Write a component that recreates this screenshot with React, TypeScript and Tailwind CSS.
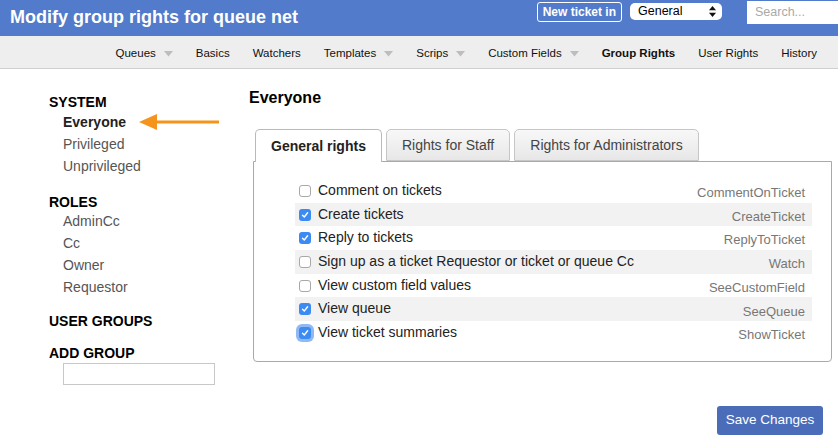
import React from "react";

const navItems: { label: string; arrow?: boolean; active?: boolean }[] = [
  { label: "Queues", arrow: true },
  { label: "Basics" },
  { label: "Watchers" },
  { label: "Templates", arrow: true },
  { label: "Scrips", arrow: true },
  { label: "Custom Fields", arrow: true },
  { label: "Group Rights", active: true },
  { label: "User Rights" },
  { label: "History" },
];

const rights: { label: string; name: string; checked: boolean; focus?: boolean }[] = [
  { label: "Comment on tickets", name: "CommentOnTicket", checked: false },
  { label: "Create tickets", name: "CreateTicket", checked: true },
  { label: "Reply to tickets", name: "ReplyToTicket", checked: true },
  { label: "Sign up as a ticket Requestor or ticket or queue Cc", name: "Watch", checked: false },
  { label: "View custom field values", name: "SeeCustomField", checked: false },
  { label: "View queue", name: "SeeQueue", checked: true },
  { label: "View ticket summaries", name: "ShowTicket", checked: true, focus: true },
];

function DownArrow() {
  return (
    <svg width="9" height="6" viewBox="0 0 9 6" className="ml-[8px]">
      <polygon points="0,0 9,0 4.5,5.5" fill="#bdbdbd" />
    </svg>
  );
}

function Checkbox({ checked, focus }: { checked: boolean; focus?: boolean }) {
  if (checked) {
    return (
      <div
        className={
          "w-[12px] h-[12px] rounded-[3px] bg-[#3b8bf2] flex items-center justify-center shrink-0 " +
          (focus ? "ring-[3px] ring-[#8fb9f5]" : "")
        }
      >
        <svg width="8" height="8" viewBox="0 0 8 8">
          <polyline points="1.5,4.2 3.3,6 6.6,1.8" fill="none" stroke="white" strokeWidth="1.4" strokeLinecap="round" strokeLinejoin="round" />
        </svg>
      </div>
    );
  }
  return <div className="w-[12px] h-[12px] rounded-[3px] bg-white border border-[#a8a8a8] shrink-0" />;
}

export default function App() {
  return (
    <div className="w-[838px] h-[445px] bg-white overflow-hidden" style={{ fontFamily: '"Liberation Sans", Arial, sans-serif' }}>
      {/* Header */}
      <div className="h-[36px] bg-[#527bcb] flex items-start">
        <div className="pl-[10px] pt-[6px] text-white font-bold text-[18px] leading-[22px]">
          Modify group rights for queue net
        </div>
        <div className="ml-auto flex items-start">
          <div className="mt-[2px] h-[20px] px-[5px] border border-white rounded-[3px] text-white font-bold text-[12px] leading-[18px]">
            New ticket in
          </div>
          <div className="ml-[8px] mt-[3px] w-[92px] h-[17px] bg-white rounded-[5px] flex items-center pl-[8px] pr-[6px] text-[12.5px] text-black">
            <span>General</span>
            <svg width="7" height="11" viewBox="0 0 7 11" className="ml-auto">
              <polygon points="3.5,0 7,4.3 0,4.3" fill="#111" />
              <polygon points="0,6.7 7,6.7 3.5,11" fill="#111" />
            </svg>
          </div>
          <div className="ml-[25px] mt-[1px] w-[91px] h-[23px] bg-white flex items-center pl-[8px] text-[12.5px] text-[#a9a9a9]">
            Search...
          </div>
        </div>
      </div>

      {/* Nav */}
      <div className="h-[33px] bg-[#eeeeee] border-b border-[#cfcfcf] flex items-center justify-end pt-[3px] pr-[21px] gap-[23px] text-[11.5px] text-[#111]">
        {navItems.map((n) => (
          <div key={n.label} className={"flex items-center " + (n.active ? "font-bold" : "")}>
            <span>{n.label}</span>
            {n.arrow && <DownArrow />}
          </div>
        ))}
      </div>

      <div className="flex">
        {/* Sidebar */}
        <div className="w-[249px] pl-[49px] pt-[25px] text-[14px]">
          <div className="font-bold text-black leading-[17px]">SYSTEM</div>
          <div className="pl-[14px]">
            <div className="h-[22px] flex items-center">
              <span className="font-bold text-[#222]">Everyone</span>
              <svg width="80" height="18" viewBox="0 0 80 18" className="ml-[13px]">
                <polygon points="0,9 18,1 18,17" fill="#f5941d" />
                <rect x="16" y="7.5" width="64" height="3" fill="#f5941d" />
              </svg>
            </div>
            <div className="h-[22px] leading-[22px] text-[#555]">Privileged</div>
            <div className="h-[22px] leading-[22px] text-[#555]">Unprivileged</div>
          </div>
          <div className="mt-[17px] font-bold text-black leading-[16px]">ROLES</div>
          <div className="pl-[14px] text-[#555]">
            <div className="h-[22px] leading-[22px]">AdminCc</div>
            <div className="h-[22px] leading-[22px]">Cc</div>
            <div className="h-[22px] leading-[22px]">Owner</div>
            <div className="h-[22px] leading-[22px]">Requestor</div>
          </div>
          <div className="mt-[15px] font-bold text-black leading-[17px]">USER GROUPS</div>
          <div className="mt-[15px] font-bold text-black leading-[17px]">ADD GROUP</div>
          <div className="ml-[14px] mt-[1px] w-[152px] h-[22px] border border-[#c8c8c8] bg-white" />
        </div>

        {/* Main */}
        <div className="flex-1 pt-[19px] pr-[6px]">
          <div className="font-bold text-[16px] leading-[20px] text-black">Everyone</div>
          <div className="mt-[21px] ml-[6px] flex gap-[4px] text-[14px] relative z-10">
            <div className="h-[33px] px-[15px] bg-white border border-[#b9b9b9] border-b-0 rounded-t-[5px] flex items-center font-bold text-[#222]">
              General rights
            </div>
            <div className="h-[32px] px-[15px] bg-gradient-to-b from-[#f8f8f8] to-[#e7e7e7] border border-[#c6c6c6] rounded-t-[5px] flex items-center text-[#444]">
              Rights for Staff
            </div>
            <div className="h-[32px] px-[15px] bg-gradient-to-b from-[#f8f8f8] to-[#e7e7e7] border border-[#c6c6c6] rounded-t-[5px] flex items-center text-[#444]">
              Rights for Administrators
            </div>
          </div>
          <div className="-mt-[1px] ml-[4px] border border-[#a9a9a9] rounded-b-[4px] pt-[17px] pb-[16px] pl-[41px] pr-[19px]">
            {rights.map((r, i) => (
              <div
                key={r.name}
                className={"h-[23.7px] flex items-center pl-[4px] pr-[7px] " + (i % 2 === 1 ? "bg-[#f2f2f2]" : "")}
              >
                <Checkbox checked={r.checked} focus={r.focus} />
                <span className="ml-[7px] text-[14px] text-[#222] -mt-[1px]">{r.label}</span>
                <span className="ml-auto text-[13px] text-[#777] pt-[4px]">{r.name}</span>
              </div>
            ))}
          </div>
          <div className="flex justify-end mt-[44px] pr-[9px]">
            <div className="w-[106px] h-[29px] bg-[#4b6db9] rounded-[3px] text-white text-[13.5px] flex items-center justify-center">
              Save Changes
            </div>
          </div>
        </div>
      </div>
    </div>
  );
}
